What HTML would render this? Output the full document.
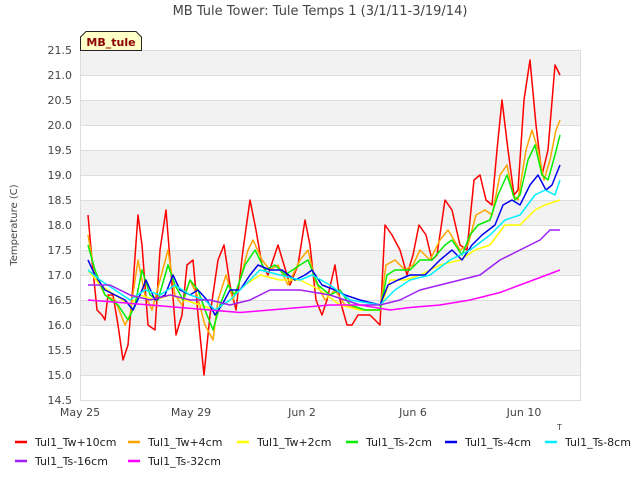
<!DOCTYPE html>
<html><head><meta charset="utf-8"><style>
html,body{margin:0;padding:0;background:#fff;}
svg text{font-family:"DejaVu Sans","Liberation Sans",sans-serif;}
</style></head><body>
<svg width="640" height="480" viewBox="0 0 640 480" xmlns="http://www.w3.org/2000/svg">
<rect width="640" height="480" fill="#fff"/>
<text x="320" y="15" text-anchor="middle" font-size="13" fill="#444">MB Tule Tower: Tule Temps 1 (3/1/11-3/19/14)</text>
<g fill="#f2f2f2">
<rect x="80" y="50" width="500" height="25"/><rect x="80" y="100" width="500" height="25"/><rect x="80" y="150" width="500" height="25"/><rect x="80" y="200" width="500" height="25"/><rect x="80" y="250" width="500" height="25"/><rect x="80" y="300" width="500" height="25"/><rect x="80" y="350" width="500" height="25"/>
</g>
<g stroke="#ddd" stroke-width="1">
<line x1="80" y1="50.5" x2="580" y2="50.5"/><line x1="80" y1="75.5" x2="580" y2="75.5"/><line x1="80" y1="100.5" x2="580" y2="100.5"/><line x1="80" y1="125.5" x2="580" y2="125.5"/><line x1="80" y1="150.5" x2="580" y2="150.5"/><line x1="80" y1="175.5" x2="580" y2="175.5"/><line x1="80" y1="200.5" x2="580" y2="200.5"/><line x1="80" y1="225.5" x2="580" y2="225.5"/><line x1="80" y1="250.5" x2="580" y2="250.5"/><line x1="80" y1="275.5" x2="580" y2="275.5"/><line x1="80" y1="300.5" x2="580" y2="300.5"/><line x1="80" y1="325.5" x2="580" y2="325.5"/><line x1="80" y1="350.5" x2="580" y2="350.5"/><line x1="80" y1="375.5" x2="580" y2="375.5"/>
<line x1="80.5" y1="50" x2="80.5" y2="400"/><line x1="580.5" y1="50" x2="580.5" y2="400"/><line x1="80" y1="400.5" x2="581" y2="400.5"/>
</g>
<g font-size="11" fill="#444" text-anchor="end">
<text x="72" y="54">21.5</text><text x="72" y="79">21.0</text><text x="72" y="104">20.5</text><text x="72" y="129">20.0</text><text x="72" y="154">19.5</text><text x="72" y="179">19.0</text><text x="72" y="204">18.5</text><text x="72" y="229">18.0</text><text x="72" y="254">17.5</text><text x="72" y="279">17.0</text><text x="72" y="304">16.5</text><text x="72" y="329">16.0</text><text x="72" y="354">15.5</text><text x="72" y="379">15.0</text><text x="72" y="404">14.5</text>
</g>
<g font-size="11" fill="#444" text-anchor="middle">
<text x="80" y="416">May 25</text><text x="191" y="416">May 29</text><text x="302" y="416">Jun 2</text><text x="413" y="416">Jun 6</text><text x="524" y="416">Jun 10</text>
</g>
<text x="557" y="430" font-size="8" fill="#444">T</text>
<text transform="translate(17,225) rotate(-90)" text-anchor="middle" font-size="10" fill="#444">Temperature (C)</text>
<g transform="matrix(1 0 0 -50 0 1125)" fill="none" stroke-width="1.5" stroke-linejoin="round">
<polyline vector-effect="non-scaling-stroke" stroke="#ff0000" points="88,18.2 92,17.3 97,16.3 102,16.2 105,16.1 108,16.6 113,16.6 118,16.0 123,15.3 128,15.6 133,16.8 138,18.2 142,17.6 148,16.0 155,15.9 160,17.5 166,18.3 170,17.3 176,15.8 182,16.2 187,17.2 193,17.3 199,16.0 204,15.0 210,16.2 218,17.3 224,17.6 230,16.8 236,16.3 243,17.5 250,18.5 256,17.9 262,17.2 268,17.0 273,17.3 278,17.6 284,17.2 290,16.8 298,17.2 305,18.1 310,17.6 316,16.5 322,16.2 327,16.5 335,17.2 340,16.5 347,16.0 352,16.0 358,16.2 370,16.2 380,16.0 385,18.0 392,17.8 400,17.5 407,17.0 413,17.4 419,18.0 426,17.8 432,17.3 437,17.4 445,18.5 452,18.3 460,17.6 467,17.5 474,18.9 480,19.0 486,18.5 492,18.4 497,19.5 502,20.5 508,19.5 514,18.6 518,18.7 524,20.5 530,21.3 536,20.0 542,19.0 548,19.5 555,21.2 560,21.0"/>
<polyline vector-effect="non-scaling-stroke" stroke="#ffa500" points="88,17.8 95,17.0 105,16.6 115,16.5 125,16.0 130,16.2 138,17.3 145,16.6 152,16.3 160,16.9 168,17.5 175,16.6 182,16.4 190,16.9 197,16.6 205,16.0 213,15.7 218,16.5 226,17.0 233,16.5 240,16.9 248,17.5 253,17.7 262,17.3 270,17.1 278,17.2 288,16.8 300,17.3 308,17.5 315,16.9 325,16.5 335,16.7 345,16.4 360,16.3 380,16.3 386,17.2 395,17.3 405,17.1 413,17.2 420,17.5 430,17.3 440,17.7 448,17.9 460,17.5 468,17.6 476,18.2 485,18.3 492,18.2 500,19.0 507,19.2 513,18.6 518,18.5 526,19.5 532,19.9 538,19.5 544,18.9 550,19.3 556,19.9 560,20.1"/>
<polyline vector-effect="non-scaling-stroke" stroke="#ffff00" points="88,17.1 100,16.8 115,16.6 130,16.4 140,16.6 155,16.5 170,16.6 185,16.5 200,16.4 215,16.3 230,16.5 245,16.8 260,17.0 280,16.9 300,16.9 320,16.7 340,16.4 360,16.3 380,16.3 390,16.9 405,16.9 420,17.0 440,17.2 460,17.3 475,17.5 490,17.6 505,18.0 520,18.0 535,18.3 545,18.4 560,18.5"/>
<polyline vector-effect="non-scaling-stroke" stroke="#00ee00" points="88,17.6 95,17.1 105,16.6 118,16.4 128,16.1 135,16.4 142,17.1 150,16.6 158,16.5 168,17.2 175,16.8 183,16.5 190,16.9 198,16.7 205,16.3 213,15.9 220,16.4 228,16.8 235,16.6 245,17.2 255,17.5 265,17.1 275,17.2 285,17.0 300,17.2 308,17.3 318,16.8 330,16.6 340,16.7 350,16.4 365,16.3 380,16.3 387,17.0 395,17.1 410,17.1 420,17.3 432,17.3 445,17.6 452,17.7 462,17.4 470,17.8 478,18.0 490,18.1 498,18.6 507,19.0 515,18.5 520,18.6 528,19.3 535,19.6 542,19.0 548,18.9 555,19.4 560,19.8"/>
<polyline vector-effect="non-scaling-stroke" stroke="#0000ee" points="88,17.3 95,17.0 105,16.7 115,16.6 125,16.5 133,16.3 140,16.6 146,16.9 155,16.5 165,16.6 173,17.0 180,16.7 190,16.6 198,16.7 207,16.5 215,16.2 222,16.4 230,16.7 240,16.7 250,17.0 258,17.2 270,17.1 282,17.1 295,16.9 305,17.0 312,17.1 322,16.8 335,16.7 345,16.6 360,16.5 380,16.4 388,16.8 398,16.9 410,17.0 425,17.0 440,17.3 452,17.5 462,17.3 472,17.6 482,17.8 495,18.0 503,18.4 512,18.5 520,18.4 530,18.8 538,19.0 546,18.7 552,18.8 560,19.2"/>
<polyline vector-effect="non-scaling-stroke" stroke="#00eeff" points="88,17.1 100,16.9 115,16.7 130,16.5 145,16.7 160,16.6 175,16.8 190,16.6 205,16.5 215,16.3 230,16.5 245,16.8 260,17.1 280,17.0 300,16.9 312,17.0 330,16.8 350,16.5 380,16.4 395,16.7 410,16.9 430,17.0 450,17.3 470,17.5 490,17.8 505,18.1 520,18.2 535,18.6 545,18.7 555,18.6 560,18.9"/>
<polyline vector-effect="non-scaling-stroke" stroke="#a020f0" points="88,16.8 110,16.8 130,16.6 150,16.5 170,16.6 190,16.5 210,16.5 230,16.4 250,16.5 270,16.7 300,16.7 330,16.6 360,16.4 380,16.4 400,16.5 420,16.7 440,16.8 460,16.9 480,17.0 500,17.3 520,17.5 540,17.7 550,17.9 560,17.9"/>
<polyline vector-effect="non-scaling-stroke" stroke="#ff00ff" points="88,16.5 120,16.45 150,16.4 180,16.35 210,16.3 240,16.25 270,16.3 300,16.35 330,16.4 360,16.4 390,16.3 410,16.35 440,16.4 470,16.5 500,16.65 520,16.8 540,16.95 560,17.1"/>
</g>
<path d="M80.5,50.5 L80.5,37 L86,31.5 L136,31.5 L141.5,37 L141.5,50.5 Z" fill="#ffffc8" stroke="#222" stroke-width="1"/>
<text x="111" y="46" text-anchor="middle" font-size="11" font-weight="bold" fill="#8b0000">MB_tule</text>
<g stroke-width="2.5">
<line x1="15" y1="442" x2="27" y2="442" stroke="#ff0000"/><line x1="128" y1="442" x2="140" y2="442" stroke="#ffa500"/><line x1="237" y1="442" x2="249" y2="442" stroke="#ffff00"/><line x1="346" y1="442" x2="358" y2="442" stroke="#00ee00"/><line x1="445" y1="442" x2="457" y2="442" stroke="#0000ee"/><line x1="545" y1="442" x2="557" y2="442" stroke="#00eeff"/>
<line x1="15" y1="461" x2="27" y2="461" stroke="#a020f0"/><line x1="128" y1="461" x2="140" y2="461" stroke="#ff00ff"/>
</g>
<g font-size="11" fill="#222">
<text x="35" y="446">Tul1_Tw+10cm</text><text x="148" y="446">Tul1_Tw+4cm</text><text x="257" y="446">Tul1_Tw+2cm</text><text x="366" y="446">Tul1_Ts-2cm</text><text x="465" y="446">Tul1_Ts-4cm</text><text x="565" y="446">Tul1_Ts-8cm</text>
<text x="35" y="465">Tul1_Ts-16cm</text><text x="148" y="465">Tul1_Ts-32cm</text>
</g>
</svg>
</body></html>
